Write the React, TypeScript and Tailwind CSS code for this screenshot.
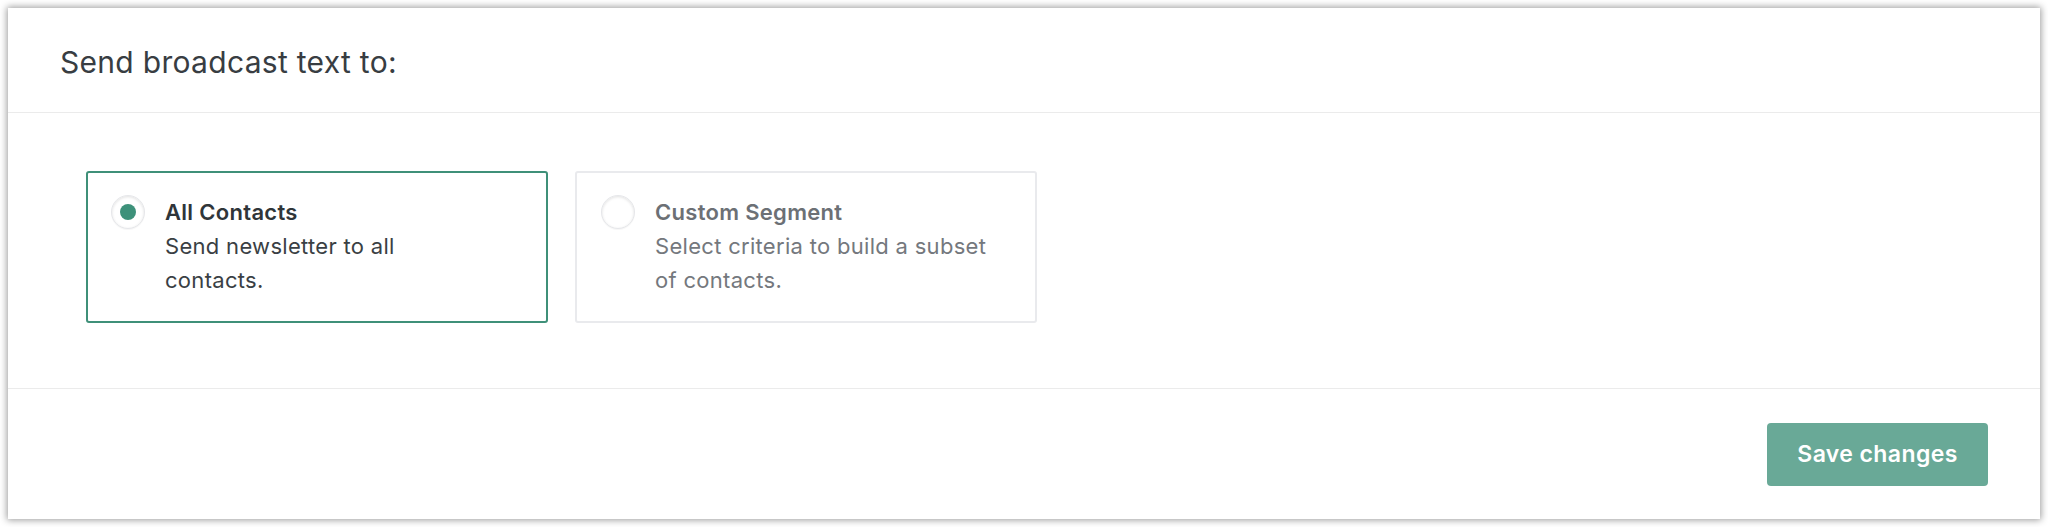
const font = { fontFamily: 'Inter, "Liberation Sans", sans-serif' }

function Radio({ checked }: { checked: boolean }) {
  return (
    <span className="flex h-[34px] w-[34px] shrink-0 items-center justify-center rounded-full border border-[#e6e7ea] bg-white shadow-[inset_0_1px_3px_rgba(0,0,0,0.12),0_1px_1px_rgba(0,0,0,0.04)]">
      {checked && <span className="h-[16px] w-[16px] rounded-full bg-[#3d917a]" />}
    </span>
  )
}

function Option({
  title,
  lines,
  checked,
}: {
  title: string
  lines: string[]
  checked: boolean
}) {
  return (
    <div
      className={
        checked
          ? 'flex h-[152px] w-[462px] gap-[20px] rounded-[3px] border-2 border-[#3f9079] bg-white pl-[23px] pt-[22px]'
          : 'flex h-[152px] w-[462px] gap-[20px] rounded-[3px] border-2 border-[#e9eaed] bg-white pl-[24px] pt-[22px]'
      }
    >
      <Radio checked={checked} />
      <div className="text-[22px] leading-[34px] tracking-[0.3px]">
        <div className={checked ? 'font-semibold text-[#2f3539]' : 'font-semibold text-[#6c7075]'}>
          {title}
        </div>
        {lines.map((l) => (
          <div key={l} className={checked ? 'text-[#3a3f44]' : 'text-[#74787d]'}>
            {l}
          </div>
        ))}
      </div>
    </div>
  )
}

export default function App() {
  return (
    <div className="h-[527px] w-[2048px] bg-white p-[8px]" style={font}>
      <div className="flex h-[511px] flex-col bg-white shadow-[0_0_7px_1px_rgba(0,0,0,0.4)]">
        <div className="flex h-[105px] items-center border-b border-[#ebebeb] px-[52px] pt-[4px]">
          <h1 className="text-[30px] font-normal tracking-[0.3px] text-[#383d42]">
            Send broadcast text to:
          </h1>
        </div>

        <div className="flex h-[276px] gap-[27px] border-b border-[#ebebeb] pl-[78px] pt-[58px]">
          <Option
            checked
            title="All Contacts"
            lines={['Send newsletter to all', 'contacts.']}
          />
          <Option
            checked={false}
            title="Custom Segment"
            lines={['Select criteria to build a subset', 'of contacts.']}
          />
        </div>

        <div className="flex flex-1 items-center justify-end pr-[52px]">
          <button className="h-[63px] w-[221px] rounded-[4px] bg-[#69a997] text-[23px] font-semibold tracking-[0.4px] text-white">
            Save changes
          </button>
        </div>
      </div>
    </div>
  )
}
